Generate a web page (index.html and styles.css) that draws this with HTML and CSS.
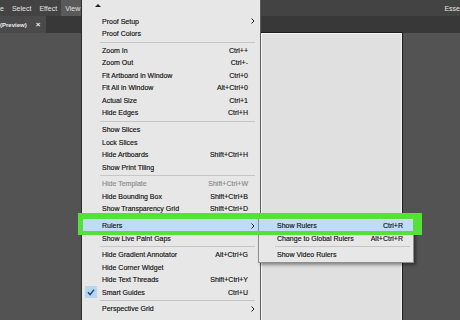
FILE: index.html
```html
<!DOCTYPE html>
<html>
<head>
<meta charset="utf-8">
<link rel="stylesheet" href="styles.css">
</head>
<body>
<div class="app">
  <header class="menubar">
    <span class="mb-item mb-first">e</span>
    <span class="mb-item">Select</span>
    <span class="mb-item">Effect</span>
    <span class="mb-item mb-active">View</span>
    <span class="mb-ws">Esse</span>
  </header>
  <div class="tabbar">
    <div class="tab"><span class="tab-title">(Preview)</span><span class="tab-close">×</span></div>
  </div>
  <main class="canvas">
    <div class="artboard"></div>
  </main>

  <div class="menu">
    <div class="scroll-up"><span class="tri"></span></div>
    <div class="row"><span></span><span class="lbl">Proof Setup</span><span class="sc"></span><span class="arr"><svg width="4" height="6" viewBox="0 0 4 6"><path d="M0.5 0.5 L3 3 L0.5 5.5" fill="none" stroke="#222" stroke-width="1"/></svg></span></div>
    <div class="row"><span></span><span class="lbl">Proof Colors</span><span class="sc"></span><span></span></div>
    <div class="sep"></div>
    <div class="row"><span></span><span class="lbl">Zoom In</span><span class="sc">Ctrl++</span><span></span></div>
    <div class="row"><span></span><span class="lbl">Zoom Out</span><span class="sc">Ctrl+-</span><span></span></div>
    <div class="row"><span></span><span class="lbl">Fit Artboard in Window</span><span class="sc">Ctrl+0</span><span></span></div>
    <div class="row"><span></span><span class="lbl">Fit All in Window</span><span class="sc">Alt+Ctrl+0</span><span></span></div>
    <div class="row"><span></span><span class="lbl">Actual Size</span><span class="sc">Ctrl+1</span><span></span></div>
    <div class="row"><span></span><span class="lbl">Hide Edges</span><span class="sc">Ctrl+H</span><span></span></div>
    <div class="sep"></div>
    <div class="row"><span></span><span class="lbl">Show Slices</span><span class="sc"></span><span></span></div>
    <div class="row"><span></span><span class="lbl">Lock Slices</span><span class="sc"></span><span></span></div>
    <div class="row"><span></span><span class="lbl">Hide Artboards</span><span class="sc">Shift+Ctrl+H</span><span></span></div>
    <div class="row"><span></span><span class="lbl">Show Print Tiling</span><span class="sc"></span><span></span></div>
    <div class="sep"></div>
    <div class="row disabled"><span></span><span class="lbl">Hide Template</span><span class="sc">Shift+Ctrl+W</span><span></span></div>
    <div class="row"><span></span><span class="lbl">Hide Bounding Box</span><span class="sc">Shift+Ctrl+B</span><span></span></div>
    <div class="row"><span></span><span class="lbl">Show Transparency Grid</span><span class="sc">Shift+Ctrl+D</span><span></span></div>
    <div class="sep"></div>
    <div class="row hl"><span></span><span class="lbl">Rulers</span><span class="sc"></span><span class="arr"><svg width="4" height="6" viewBox="0 0 4 6"><path d="M0.5 0.5 L3 3 L0.5 5.5" fill="none" stroke="#222" stroke-width="1"/></svg></span></div>
    <div class="row"><span></span><span class="lbl">Show Live Paint Gaps</span><span class="sc"></span><span></span></div>
    <div class="sep"></div>
    <div class="row"><span></span><span class="lbl">Hide Gradient Annotator</span><span class="sc">Alt+Ctrl+G</span><span></span></div>
    <div class="row"><span></span><span class="lbl">Hide Corner Widget</span><span class="sc"></span><span></span></div>
    <div class="row"><span></span><span class="lbl">Hide Text Threads</span><span class="sc">Shift+Ctrl+Y</span><span></span></div>
    <div class="row"><span class="chk"><svg width="12" height="12" viewBox="0 0 12 12"><path d="M3 6.3 L5.1 8.6 L9 3.6" fill="none" stroke="#1d3f72" stroke-width="1.4"/></svg></span><span class="lbl">Smart Guides</span><span class="sc">Ctrl+U</span><span></span></div>
    <div class="sep"></div>
    <div class="row"><span></span><span class="lbl">Perspective Grid</span><span class="sc"></span><span class="arr"><svg width="4" height="6" viewBox="0 0 4 6"><path d="M0.5 0.5 L3 3 L0.5 5.5" fill="none" stroke="#222" stroke-width="1"/></svg></span></div>
  </div>

  <div class="submenu">
    <div class="row hl"><span></span><span class="lbl">Show Rulers</span><span class="sc">Ctrl+R</span><span></span></div>
    <div class="row"><span></span><span class="lbl">Change to Global Rulers</span><span class="sc">Alt+Ctrl+R</span><span></span></div>
    <div class="sep"></div>
    <div class="row"><span></span><span class="lbl">Show Video Rulers</span><span class="sc"></span><span></span></div>
  </div>

  <div class="callout"></div>
</div>
</body>
</html>
```

FILE: styles.css
```css
* { box-sizing: border-box; }
html, body { margin: 0; padding: 0; }
body {
  width: 460px;
  height: 320px;
  overflow: hidden;
  background: #535353;
  font-family: "Liberation Sans", Arial, sans-serif;
}
.app {
  position: relative;
  width: 460px;
  height: 320px;
  display: flex;
  flex-direction: column;
}
.menubar {
  height: 16px;
  background: #434343;
  display: flex;
  align-items: stretch;
  color: #e2e2e2;
  font-size: 7px;
  white-space: nowrap;
}
.mb-item {
  display: flex;
  align-items: center;
  padding: 0 4px;
}
.mb-first { padding-left: 0; }
.mb-active { background: #5a5a5a; padding-right: 5px; }
.mb-ws {
  margin-left: auto;
  padding-right: 0;
  display: flex;
  align-items: center;
}
.tabbar {
  height: 17px;
  background: #383838;
  display: flex;
}
.tab {
  width: 46px;
  background: #4a4a4a;
  display: flex;
  align-items: center;
  gap: 9px;
  color: #f0f0f0;
  font-size: 6px;
  font-weight: bold;
  white-space: nowrap;
}
.tab-close { font-size: 8px; }
.canvas {
  position: relative;
  flex: 1;
  background: #535353;
}
.artboard {
  position: absolute;
  left: 260px;
  top: -1px;
  width: 143px;
  height: 300px;
  background: #e0e0e0;
  border: 1px solid #1c1c1c;
  box-shadow: inset 1px 1px 0 #f6f6f6, inset -1px 0 0 #f6f6f6;
}
.menu {
  position: absolute;
  left: 81px;
  top: 0;
  width: 180px;
  height: 330px;
  background: #e7e7e7;
  border-left: 1px solid #2e2e2e;
  border-right: 1px solid #5c5c5c;
  font-size: 7px;
  color: #111;
  z-index: 2;
}
.scroll-up {
  height: 15px;
  position: relative;
}
.tri {
  position: absolute;
  left: 13px;
  top: 4px;
  width: 0;
  height: 0;
  border-left: 3px solid transparent;
  border-right: 3px solid transparent;
  border-bottom: 3px solid #222;
}
.row {
  display: grid;
  grid-template-columns: 20px 1fr auto 12px;
  align-items: center;
  height: 12.5px;
  white-space: nowrap;
  -webkit-text-stroke: 0.15px #111;
}
.row .arr {
  display: flex;
  align-items: center;
  padding-left: 3px;
}
.row .arr svg { display: block; }
.row.disabled { color: #8c8c8c; -webkit-text-stroke: 0.15px #8c8c8c; }
.row.hl { background: #bfdcf3; }
.chk {
  display: block;
  width: 12px;
  height: 12px;
  margin-left: 3px;
  background: #b6d5ee;
}
.chk svg { display: block; }
.sep {
  height: 4.2px;
  padding: 1.6px 5px 1.6px 18px;
}
.sep::after {
  content: "";
  display: block;
  height: 1px;
  background: #c6c6c6;
}
.submenu {
  position: absolute;
  left: 258px;
  top: 214px;
  width: 156px;
  background: #e7e7e7;
  border: 1px solid #8e8e8e;
  padding: 4.5px 0 1px;
  box-shadow: 2px 2px 3px rgba(0,0,0,0.4);
  font-size: 7px;
  color: #111;
  z-index: 3;
}
.submenu .row { grid-template-columns: 18px 1fr auto 10px; }
.submenu .sep { padding-left: 16px; padding-right: 3px; }
.callout {
  position: absolute;
  left: 78px;
  top: 213px;
  width: 344px;
  height: 22px;
  border-style: solid;
  border-color: #55e137;
  border-width: 6px 9px 4px 5px;
  z-index: 4;
}
```
